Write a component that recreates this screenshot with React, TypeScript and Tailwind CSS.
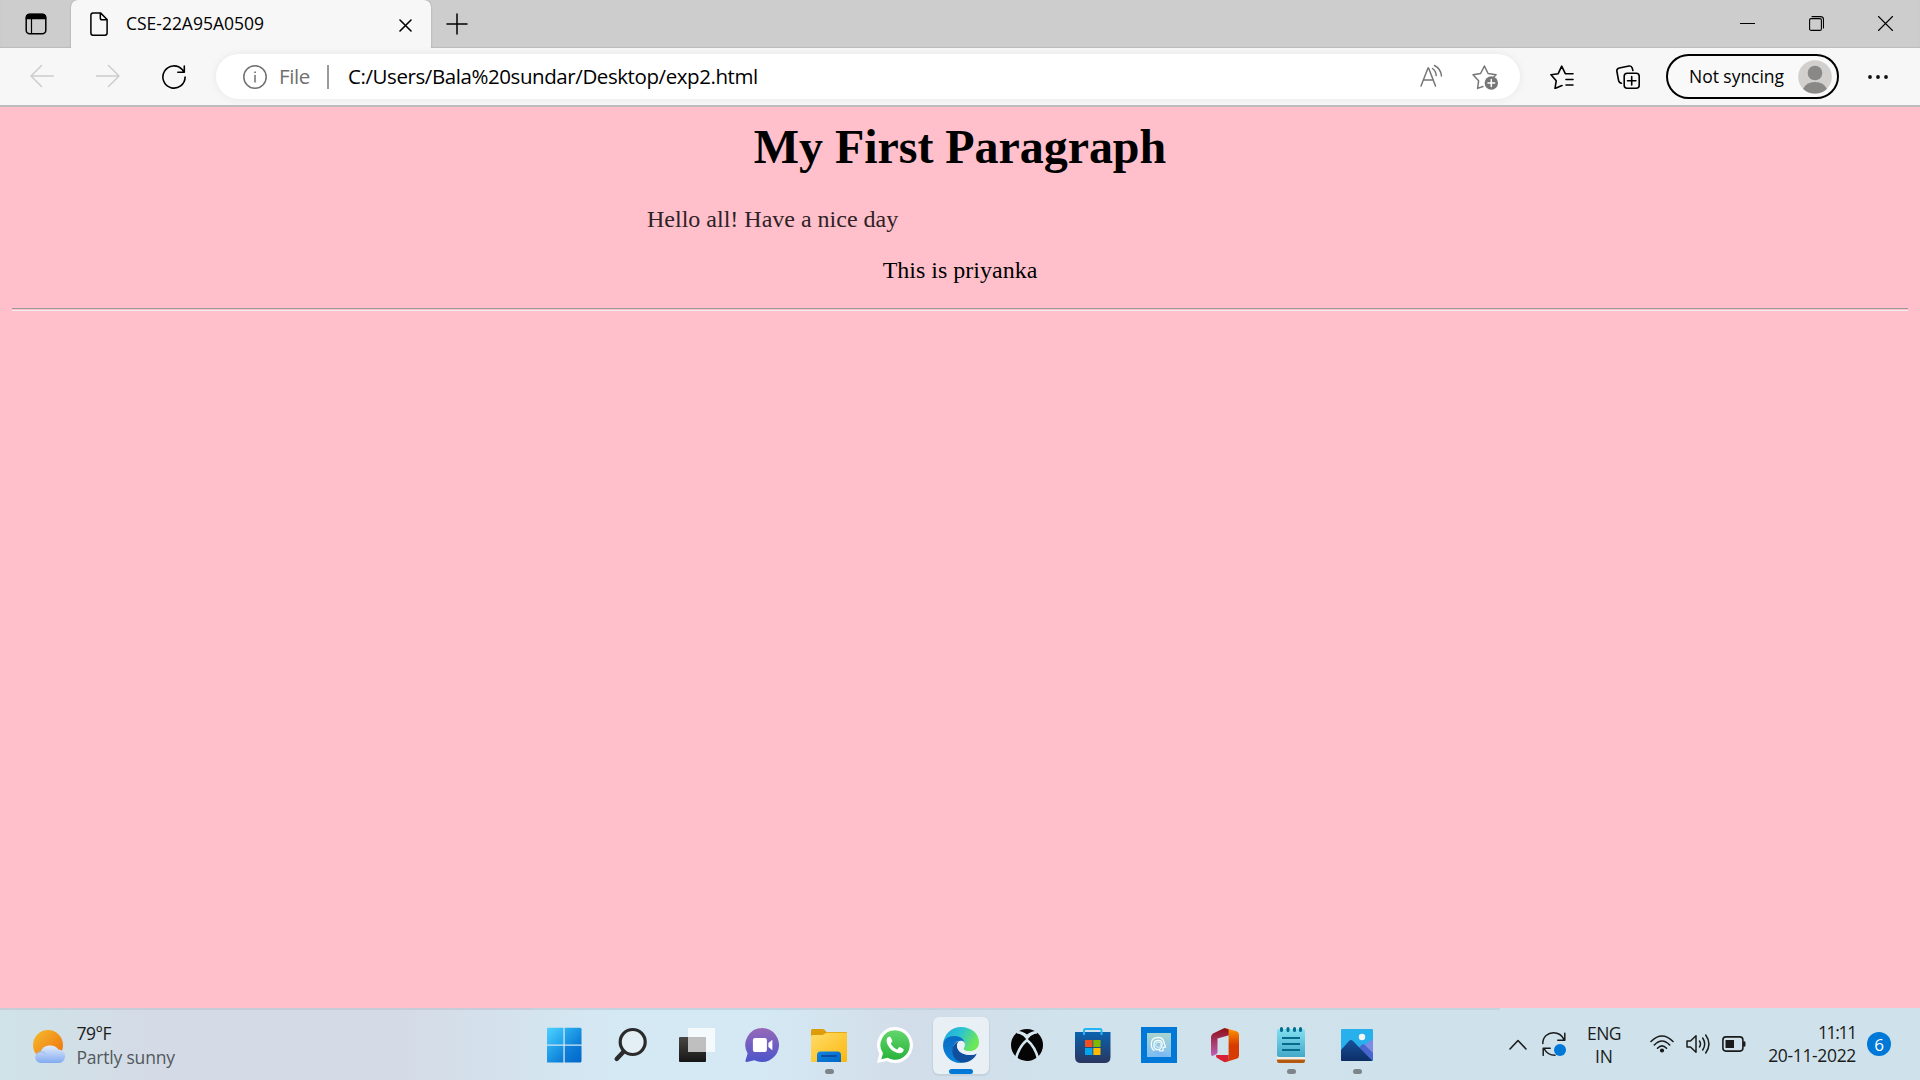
import React from "react";

const line = { fill: "none", stroke: "currentColor", strokeLinecap: "round", strokeLinejoin: "round" } as const;

function TabStrip() {
  return (
    <div className="flex h-12 bg-[#cdcdcd] text-black shadow-[inset_0_-1px_1px_#bcbcbc]">
      <div className="flex h-[47px] w-[71px] items-center pl-[25px]">
        <svg className="size-[22px]" viewBox="0 0 22 22" {...line} strokeWidth="1.5">
          <rect x="1.2" y="1.2" width="19.6" height="19.6" rx="3.5" />
          <path d="M1.5 4.5Q1.5 1.5 4.5 1.5h13q3 0 3 3v1H1.5z" fill="currentColor" />
          <path d="M6.5 5v15.5" strokeWidth="1.2" />
        </svg>
      </div>
      <div className="flex h-full w-[360px] items-center rounded-t-[7px] bg-[#f7f7f7] pl-[19px] shadow-[0_0_2px_#999]">
        <svg className="h-6 w-[18px] shrink-0" viewBox="0 0 18 24" {...line} strokeWidth="1.5">
          <path d="M3 .9h7.5L17.1 7.5V21a2.2 2.2 0 0 1-2.2 2.2H3A2.2 2.2 0 0 1 .9 21V3A2.2 2.2 0 0 1 3 .9zM10.3 1v5a1.8 1.8 0 0 0 1.8 1.8H17" />
        </svg>
        <span className="ml-[18px] w-[273px] pb-[2px] whitespace-nowrap text-[17.5px] leading-6 tracking-[-0.02px]">CSE-22A95A0509</span>
        <svg className="mt-[2px] size-[13px] shrink-0" viewBox="0 0 13 13" {...line} strokeWidth="1.6"><path d="M1 1l11 11M12 1L1 12" /></svg>
      </div>
      <div className="flex h-[47px] flex-1 items-center pl-[15px]">
        <svg className="size-[22px]" viewBox="0 0 22 22" {...line} strokeWidth="1.5"><path d="M11 1v20M1 11h20" /></svg>
      </div>
      <div className="flex h-[47px] items-center gap-[54px] pr-[27px]">
        <svg className="size-[15px]" viewBox="0 0 15 15" {...line} strokeWidth="1"><path d="M0 7.5h15" /></svg>
        <svg className="size-[15px]" viewBox="0 0 15 15" {...line} strokeWidth="1.1">
          <rect x=".6" y="2.6" width="11.8" height="11.8" rx="1.5" />
          <path d="M3 .6h8.5a3 3 0 0 1 3 3V12" />
        </svg>
        <svg className="size-[15px]" viewBox="0 0 15 15" {...line} strokeWidth="1.1"><path d="M.5.5l14 14M14.5.5l-14 14" /></svg>
      </div>
    </div>
  );
}

function Toolbar() {
  return (
    <div className="flex h-[59px] items-center border-b-2 border-[#bdbdbd] bg-[#f7f7f7] pl-[30px]">
      <svg className="mb-[2px] size-6 text-[#cdcdcd]" viewBox="0 0 24 24" {...line} strokeWidth="1.5"><path d="M11.5 1.5L1 12l10.500 10.500M1 12h22.500" /></svg>
      <svg className="mb-[2px] ml-[42px] size-6 text-[#cdcdcd]" viewBox="0 0 24 24" {...line} strokeWidth="1.5"><path d="M12.500 1.500L23 12l-10.500 10.500M23 12H.5" /></svg>
      <svg className="ml-[42px] size-6" viewBox="0 0 24 24" {...line} strokeWidth="1.6">
        <path d="M23.100 12A11.100 11.100 0 1 1 20.200 4.500L22 7M22.300 1v6.200h-6.500" />
      </svg>
      <div className="ml-[30px] flex h-[45px] w-[1304px] shrink-0 items-center rounded-full bg-white pl-[27px] shadow-[0_0_8px_rgba(0,0,0,0.07)]">
        <svg className="size-6 text-[#707070]" viewBox="0 0 24 24" {...line} strokeWidth="1.5">
          <circle cx="12" cy="12" r="11.200" /><path d="M12 10.500V17" /><circle cx="12" cy="7.200" r=".5" fill="currentColor" strokeWidth=".8" />
        </svg>
        <span className="ml-[12px] w-[48px] pb-[2px] text-[20.5px] leading-7 tracking-[-0.4px] text-[#707070]">File</span>
        <span className="h-6 w-[2px] bg-[#9a9a9a]" />
        <span className="ml-[19px] w-[1072px] pb-[2px] whitespace-nowrap text-[20.5px] leading-7 tracking-[-0.42px] text-black">C:/Users/Bala%20sundar/Desktop/exp2.html</span>
        <svg className="mb-[2px] h-6 w-[23px] text-[#767676]" viewBox="0 0 23 24" {...line} strokeWidth="1.5">
          <path d="M1 22L8 4h.6l6.900 18M3.500 16h9.800M12.500 4.500q3.500 2.500 3.700 7M14.500 1.500q6.500 3.500 7 10.500" />
        </svg>
        <svg className="ml-[29px] h-[26px] w-[27px] text-[#767676]" viewBox="0 0 27 26" {...line} strokeWidth="1.5">
          <path d="M11 22.500l-5.400 1.900 1-7.600L1 10.800l7.600-1.300L12.400 2l3.700 7.500 8 1.300-2 1.800" />
          <circle cx="19.300" cy="19" r="6.700" fill="currentColor" stroke="none" />
          <path d="M19.300 15.600v6.800M15.900 19h6.800" stroke="white" />
        </svg>
      </div>
      <svg className="ml-[30px] size-6 shrink-0" viewBox="0 0 24 24" {...line} strokeWidth="1.6">
        <path d="M12 20.500l-7 3 1.200-7.700L1 9.700l7.200-1L11.700 1.200l3.600 7.500H23M16 14.500h7M16 20h7" />
      </svg>
      <svg className="ml-[42px] size-6 shrink-0" viewBox="0 0 24 24" {...line} strokeWidth="1.6">
        <path d="M5.500 18.200Q3.200 18 2.600 15.500L.9 6.500Q.4 3.600 3.300 3L13 1q2.500-.4 3.200 2l.7 2.500" />
        <rect x="8.200" y="8.200" width="15" height="15" rx="3" /><path d="M15.700 11.500v8.400M11.500 15.700h8.400" />
      </svg>
      <div className="ml-[26px] flex h-[45px] w-[173px] shrink-0 items-center rounded-full border-2 border-black bg-[#f9f9f9] pl-[21px]">
        <span className="w-[109px] pb-[2px] whitespace-nowrap text-[17.5px] leading-6 tracking-[-0.03px]">Not syncing</span>
        <svg className="size-[34px] shrink-0" viewBox="0 0 34 34">
          <circle cx="17" cy="17" r="16.800" fill="#d2d0ce" />
          <circle cx="17" cy="13" r="7.300" fill="#8a8886" />
          <path d="M5.200 29Q8 22 17 22t11.800 7Q24 33.500 17 33.500T5.200 29z" fill="#8a8886" />
        </svg>
      </div>
      <svg className="ml-[29px] h-6 w-5 shrink-0" viewBox="0 0 20 24"><g fill="#111"><circle cx="2" cy="12" r="1.900" /><circle cx="10" cy="12" r="1.900" /><circle cx="18" cy="12" r="1.900" /></g></svg>
    </div>
  );
}

function Page() {
  return (
    <main className="flex-1 bg-[#ffc0cb] px-3 font-['Liberation_Serif',serif] text-2xl leading-[27px] text-black">
      <h1 className="pt-[12px] text-center text-[48px] leading-[55px] font-bold tracking-[-0.05px]">My First Paragraph</h1>
      <p className="mt-8 pl-[635px] leading-[27px] text-[#2e2226]">Hello all! Have a nice day</p>
      <p className="mt-6 text-center">This is priyanka</p>
      <hr className="mt-6 h-[3px] border-t border-b border-t-[#9a9a9a] border-b-[#eeeeee]" />
    </main>
  );
}

const icons: Record<string, React.ReactNode> = {
  start: (
    <g transform="translate(-.8 .3)">
      <path d="M2 .5h15.200v16.700H.5V2A1.500 1.500 0 0 1 2 .5z" fill="url(#w1)" />
      <path d="M18.500.5h15.300A1.500 1.500 0 0 1 35.300 2v15.200H18.500z" fill="url(#w2)" />
      <path d="M.5 18.500h16.700v16.800H2a1.500 1.500 0 0 1-1.500-1.500z" fill="url(#w2)" />
      <path d="M18.500 18.500h16.800v15.300a1.500 1.500 0 0 1-1.500 1.500H18.500z" fill="url(#w3)" />
    </g>
  ),
  search: (
    <g transform="translate(-1 0)" fill="none" stroke="#2b2b2b" strokeLinecap="round">
      <circle cx="20.700" cy="15" r="12.500" fill="#e3eff5" strokeWidth="3.200" />
      <path d="M11.500 24.800L4.700 32" strokeWidth="4.400" />
    </g>
  ),
  tasks: (
    <g>
      <rect x="0" y="10" width="27" height="25" rx="1" fill="url(#dk)" />
      <rect x="9" y="1" width="27" height="24" rx="1" fill="#fff" fillOpacity=".75" />
      <path d="M9 10h18v15H9z" fill="#bcbcbc" fillOpacity=".85" />
    </g>
  ),
  chat: (
    <g transform="translate(-.6 0)">
      <path d="M18 1a17 17 0 1 1-8 32.200L2.500 35q-1.700.3-1.400-1.400L3.200 26.500A17 17 0 0 1 18 1z" fill="url(#ch)" />
      <rect x="8.500" y="11" width="14" height="14" rx="2" fill="#fff" />
      <path d="M24 16l4-3.200V23.200L24 20z" fill="#fff" />
    </g>
  ),
  files: (
    <g>
      <path d="M0 3.500Q0 2 1.500 2h10q1.200 0 2 .8L15.500 5H35q1 0 1 1v8H0z" fill="#dd9c08" />
      <path d="M0 9.500Q0 8 1.500 8h10L15.500 5.800H35q1 0 1 1V34q0 1-1 1H1q-1 0-1-1z" fill="url(#fo)" />
      <path d="M6 35v-7q0-3.500 3.500-3.500h17q3.500 0 3.500 3.500v7z" fill="url(#w3)" />
      <path d="M11 29h14" stroke="#0b4ba0" strokeWidth="2" strokeLinecap="round" />
    </g>
  ),
  whatsapp: (
    <g>
      <path d="M18 0a18 18 0 1 1-8.300 34L0 36l2.300-9.300A18 18 0 0 1 18 0z" fill="#fff" />
      <path d="M18 3.200A14.800 14.800 0 1 1 10.500 30.800L4.300 32.300 6 26.300A14.800 14.800 0 0 1 18 3.200z" fill="url(#wa)" />
      <path d="M12.400 9.500c-2 .6-3.200 2.300-2.800 5C10.600 20 16 25.500 22 26.200c2.500.2 4.700-1.300 4.800-3.700 0-.7-3.700-2.800-4.400-2.600-.8.200-1.600 2.500-2.300 2.500-2.600-.7-5.400-3.400-6.300-5.800 0-.8 1.600-1.600 1.600-2.400S13.600 9.200 12.400 9.500z" fill="#fff" />
    </g>
  ),
  edge: (
    <g>
      <path d="M0 17C1 7 8.500 0 18 0c10 0 18 6.500 18 15 0 6-4.500 9.300-9.500 9.300-4 0-6-1.300-6-2.600 0-1 1.500-1.700 1.500-4.200 0-4.300-4-7.500-9.500-7.500C6 10 1.500 13 0 17z" fill="url(#e1)" />
      <path d="M0 18C.5 12 5.500 9 11.500 9 18 9 22 13 22 17.500l-.6 2.300C21 17 20 14 16.500 14c-4 0-6.700 4.700-6.700 9 0 6 4.700 11 10.200 12.800-1 .2-2 .2-2.500.2C7.500 36 0 28 0 18z" fill="url(#e2)" />
      <path d="M16.500 14C11 16 9.300 20 9.300 24c0 6.500 5.200 11 10.700 11.800C26 35.500 31 32 33.300 27.500c.4-.8-.2-1.200-.9-.8-2 1.100-4.400 1.300-5.900 1.300-6.500 0-12-3.700-12.500-9 0-2 1-4 2.500-5z" fill="#104f9e" />
      <path d="M14 18.500c0-2.500 1.700-4.800 4.300-4.800 2 0 3.700 1.600 3.700 3.800s-1.500 3.200-1.500 4.200c0 1.300 2 2.600 6 2.600 2 0 4.500-.4 6.500-2l.2 4.400c-2 1-4.400 1.300-6.500 1.300C20 28 14 24.500 14 18.500z" fill="#eaf1f7" />
    </g>
  ),
  xbox: (
    <g>
      <circle cx="18" cy="18" r="16" fill="#050505" />
      <path d="M8 5.500c3.500-.5 6.500 1 10 3.600 3.500-2.600 6.500-4.100 10-3.600M6.500 33Q9.500 20 18 13q8.500 7 11.500 20" fill="none" stroke="#d5e6ef" strokeWidth="2.600" />
      <path d="M9.500 6.300Q15 8.500 18 13q3-4.500 8.500-6.700Q22 6 18 9.100 14 6 9.500 6.300z" fill="#d5e6ef" />
    </g>
  ),
  store: (
    <g>
      <path d="M0 5h35.500v25q0 6-6 6H6q-6 0-6-6z" fill="url(#st)" />
      <path d="M9 8V3.500Q9 2 10.500 2H25q1.500 0 1.500 1.500V8" fill="none" stroke="#22b5f5" strokeWidth="2" />
      <path d="M10 13h7.500v7H10z" fill="#f25022" /><path d="M18.300 13h7.200v7h-7.200z" fill="#7fba00" />
      <path d="M10 21h7.500v7H10z" fill="#00a4ef" /><path d="M18.300 21h7.200v7h-7.200z" fill="#ffb900" />
    </g>
  ),
  mind: (
    <g>
      <path d="M0 0h36v36H0z" fill="#0078d7" /><path d="M6 6h24v24H6z" fill="url(#mi)" />
      <path d="M18 24h4v-3.300l2.500-.7-1.500-4.500q-.5-5-6-5-6.500 0-6.700 6Q10 21.500 13.500 24M15 22.500q-2.600-2-2.100-5.200.5-3.800 4.300-3.800t4 3.800q0 3.200-2.700 5.200z" fill="none" stroke="#f5fbff" strokeWidth="1.300" />
      <circle cx="17.300" cy="17.800" r="2.600" fill="none" stroke="#f5fbff" strokeWidth=".8" />
      <path d="M12.500 24.500h10L28 30H18z" fill="#7ab8f2" fillOpacity=".7" />
    </g>
  ),
  office: (
    <g>
      <path d="M17.500 1L22 2.300v6L10.500 11.500v13.500q0 1.500-1.200 2.200L5.500 29Q4 29 4 27V10.500Q4 7.500 7 6z" fill="url(#o1)" />
      <path d="M18 1l11.500 3.200Q32 5 32 7.500v21q0 2.500-2.500 3.200L18 35.300l3.600-3V2.500z" fill="url(#o2)" />
      <path d="M9.500 28h12.100v5.500L18 35.300Q17 35.300 9.500 30.500 8.300 28 9.500 28z" fill="#d71f35" />
    </g>
  ),
  notes: (
    <g>
      <path d="M4 28h28v6q0 2-2 2H6q-2 0-2-2z" fill="#b45a10" /><path d="M4 28h28v4.500H4z" fill="#f5eee7" />
      <path d="M6 2h24q2 0 2 2v26H6q-2 0-2-2V4q0-2 2-2z" fill="url(#no)" />
      <path d="M8.500 1.500v2M15 1.500v2M21.500 1.500v2M27.500 1.500v2" stroke="#056a8c" strokeWidth="3" strokeLinecap="round" />
      <path d="M9 11h18M9 17h18M9 23h18" stroke="#056a8c" strokeWidth="2" />
    </g>
  ),
  photos: (
    <g>
      <rect x="2" y="2" width="32" height="32" rx="1" fill="#28b0ec" />
      <path d="M34 12v21L20 22z" fill="#7d8be4" /><path d="M20 21l2.500-3q1.500-1.500 3.300 0L34 26v7l-4 1z" fill="#4966cf" />
      <path d="M2 23L10 14q2-2 4 0l19.500 20H3q-1 0-1-1z" fill="url(#ph)" /><circle cx="23" cy="10" r="3.200" fill="#f5f6f7" />
    </g>
  ),
};

function Gradients() {
  const g = (id: string, a: string, b: string, x2 = "1") => (
    <linearGradient key={id} id={id} x1="0" y1="0" x2={x2} y2="1"><stop stopColor={a} /><stop offset="1" stopColor={b} /></linearGradient>
  );
  return (
    <svg className="absolute size-0">
      <defs>
        {g("w1", "#4fd0ff", "#1ca0ea")}{g("w2", "#2db0f2", "#0878d4")}{g("w3", "#1285df", "#0067c8")}
        {g("dk", "#494744", "#161616", "0")}{g("ch", "#9668b8", "#4c55ca", "0")}{g("fo", "#ffdc68", "#fbb80f")}
        {g("wa", "#63d66b", "#28b33b", "0")}{g("st", "#0b62b0", "#29365f", "0")}{g("mi", "#a8d5cd", "#7dbdf2", "0")}
        {g("o1", "#8f0f16", "#bd62b4", "0")}{g("no", "#82dff0", "#43a9c8", "0")}
        {g("ph", "#17519a", "#0c2e66", "0")}{g("sun", "#f5bd2d", "#ee6b0d")}{g("cl", "#e3edfc", "#83aaf0", "0")}
        <linearGradient id="o2" x1="0" y1="0" x2="0" y2="1"><stop stopColor="#ff9900" /><stop offset=".5" stopColor="#d83b01" /></linearGradient>
        <linearGradient id="e1" x1="0" y1="0" x2="1" y2=".4"><stop stopColor="#1fa5df" /><stop offset=".5" stopColor="#2cc3d3" /><stop offset="1" stopColor="#6de856" /></linearGradient>
        {g("e2", "#0a6bc4", "#0a84d8", "0")}
      </defs>
    </svg>
  );
}

const apps: { id: string; state?: "open" | "active" }[] = [
  { id: "start" }, { id: "search" }, { id: "tasks" }, { id: "chat" }, { id: "files", state: "open" }, { id: "whatsapp" },
  { id: "edge", state: "active" }, { id: "xbox" }, { id: "store" }, { id: "mind" }, { id: "office" },
  { id: "notes", state: "open" }, { id: "photos", state: "open" },
];

function Taskbar() {
  return (
    <footer className="flex h-[72px] bg-[linear-gradient(90deg,#cfe3e8_0px,#d4dbe6_150px,#d4dbe6_400px,#d4e9f4_620px,#d4e9f4_760px,#d2dde9_910px,#d0e2ec_1050px,#cfe2eb_1500px,#cfe1ea_1920px)] text-[#1b1b1b]">
      <div className="flex w-[532px] items-center border-t-2 border-[#c6cdd9] pl-[33px]">
        <svg className="mt-[3px] size-[33px]" viewBox="0 0 33 33">
          <circle cx="15" cy="15" r="15" fill="url(#sun)" />
          <path d="M8 33a5.500 5.500 0 0 1-.5-11 10 9 0 0 1 18-2.500A6.800 6.800 0 0 1 26.500 33z" fill="url(#cl)" />
          <path d="M4 23q5-3 9 1" fill="none" stroke="#9dbcf3" strokeWidth="1" />
        </svg>
        <div className="ml-[10.5px] text-[17.5px] leading-6">
          <div className="tracking-[-0.5px]">79°F</div>
          <div className="tracking-[-0.2px] text-[#53585d]">Partly sunny</div>
        </div>
      </div>
      <div className="flex border-t-2 border-[#c4d3dd]">
        {apps.map(({ id, state }) => (
          <div key={id} className="relative flex h-[70px] w-[66px] items-center justify-center">
            <div className={state === "active" ? "flex h-[57px] w-14 items-center justify-center rounded-md bg-[#e8f0f6] shadow-[0_1px_1px_1px_#c4d2dd]" : "flex h-[57px] w-14 items-center justify-center"}>
              <svg className="size-9" viewBox="0 0 36 36">{icons[id]}</svg>
            </div>
            {state && <span className={state === "active" ? "absolute bottom-[6px] left-[21px] h-[5px] w-6 rounded-full bg-[#0078d7]" : "absolute bottom-[6px] left-[29px] h-[5px] w-[9px] rounded-full bg-[#7d848a]"} />}
          </div>
        ))}
      </div>
      <div className="w-[110px] border-t-2 border-[#c4d3dd]" />
      <div className="flex flex-1 items-center pl-[9px]">
        <svg className="h-[11px] w-[18px]" viewBox="0 0 18 11" {...line} strokeWidth="1.6"><path d="M1 10l8-8.500L17 10" /></svg>
        <svg className="ml-[15px] size-6" viewBox="0 0 24 24" {...line} strokeWidth="1.500">
          <path d="M.8 11.500C.8 4.500 6 .8 11.500.8c4.500 0 8.500 2.500 10.700 7M22.800 1.300v7h-7M13 23.200c-5 0-9-2.700-11-6.700M1.200 23.300v-7h7" />
          <circle cx="18" cy="18" r="6" fill="#0078d7" stroke="none" />
        </svg>
        <div className="ml-[15px] w-[46px] pt-px text-center text-[17.5px] leading-[23px]">
          <div className="tracking-[-0.6px]">ENG</div><div>IN</div>
        </div>
        <svg className="ml-[23px] h-[18px] w-6" viewBox="0 0 24 18" {...line} strokeWidth="1.600">
          <path d="M1 6.500Q12-4.500 23 6.500M4.300 10Q12 2 19.700 10M7.500 13.200q4.500-4.500 9 0" /><circle cx="12" cy="15.500" r="1.300" fill="currentColor" />
        </svg>
        <svg className="ml-3 h-[22px] w-6" viewBox="0 0 24 22" {...line} strokeWidth="1.500">
          <path d="M1 8h3.500L10 2.800v16.400L4.500 14H1zM13.500 8q2 3 0 6M16.700 5q4 6 0 12M19.700 2q6.500 9 0 18" />
        </svg>
        <svg className="ml-3 h-4 w-6" viewBox="0 0 24 16" {...line} strokeWidth="1.600">
          <rect x=".9" y=".9" width="20" height="14.200" rx="3" /><path d="M3.500 4h8.500v8H3.500z" fill="currentColor" stroke="none" /><path d="M22.200 6.500v3" strokeWidth="2.500" />
        </svg>
        <div className="ml-[10px] w-[100px] text-right text-[17.5px] leading-[23px] whitespace-nowrap">
          <div className="tracking-[-1.3px]">11:11</div><div className="tracking-[-0.35px]">20-11-2022</div>
        </div>
        <span className="ml-[11px] flex size-6 items-center justify-center rounded-full bg-[#0078d7] text-[17px] leading-none text-white">6</span>
      </div>
    </footer>
  );
}

export default function App() {
  return (
    <div className="flex h-[1080px] w-[1920px] flex-col overflow-hidden font-['Open_Sans','Noto_Sans',sans-serif]">
      <Gradients />
      <TabStrip />
      <Toolbar />
      <Page />
      <Taskbar />
    </div>
  );
}
